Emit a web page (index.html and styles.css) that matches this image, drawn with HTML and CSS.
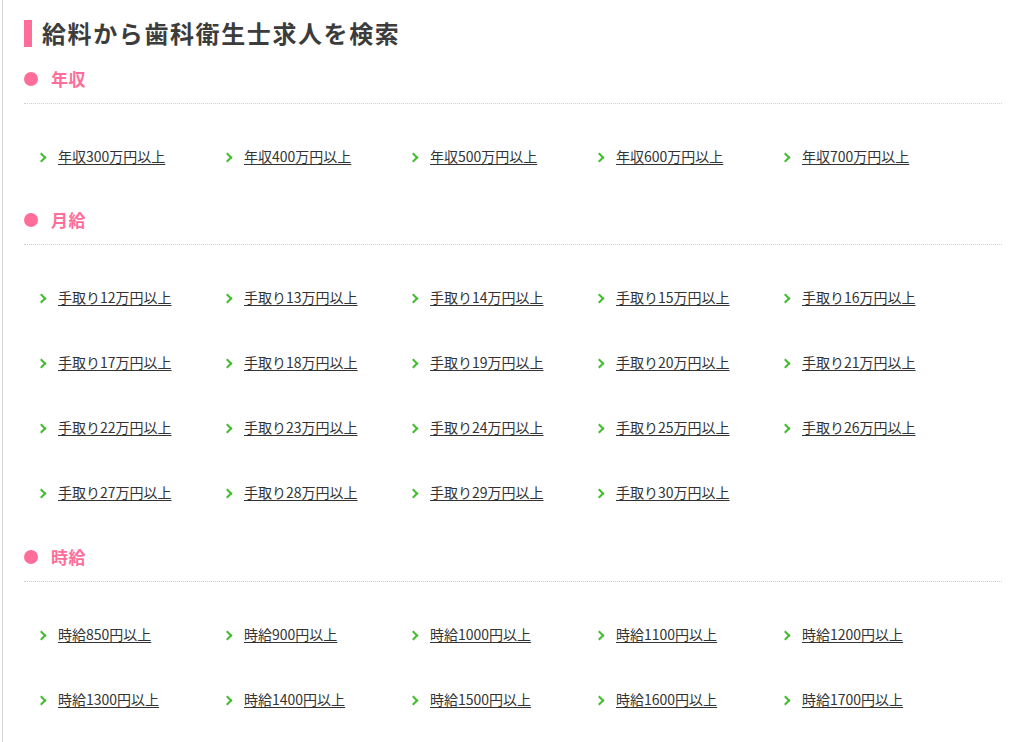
FILE: index.html
```html
<!DOCTYPE html>
<html lang="ja">
<head>
<meta charset="utf-8">
<link rel="stylesheet" href="styles.css">
</head>
<body>
<div class="page">
  <h2 class="title">給料から歯科衛生士求人を検索</h2>

  <section class="group">
    <h3 class="group-head">年収</h3>
    <ul class="links">
      <li><a href="#">年収300万円以上</a></li>
      <li><a href="#">年収400万円以上</a></li>
      <li><a href="#">年収500万円以上</a></li>
      <li><a href="#">年収600万円以上</a></li>
      <li><a href="#">年収700万円以上</a></li>
    </ul>
  </section>

  <section class="group">
    <h3 class="group-head">月給</h3>
    <ul class="links">
      <li><a href="#">手取り12万円以上</a></li>
      <li><a href="#">手取り13万円以上</a></li>
      <li><a href="#">手取り14万円以上</a></li>
      <li><a href="#">手取り15万円以上</a></li>
      <li><a href="#">手取り16万円以上</a></li>
      <li><a href="#">手取り17万円以上</a></li>
      <li><a href="#">手取り18万円以上</a></li>
      <li><a href="#">手取り19万円以上</a></li>
      <li><a href="#">手取り20万円以上</a></li>
      <li><a href="#">手取り21万円以上</a></li>
      <li><a href="#">手取り22万円以上</a></li>
      <li><a href="#">手取り23万円以上</a></li>
      <li><a href="#">手取り24万円以上</a></li>
      <li><a href="#">手取り25万円以上</a></li>
      <li><a href="#">手取り26万円以上</a></li>
      <li><a href="#">手取り27万円以上</a></li>
      <li><a href="#">手取り28万円以上</a></li>
      <li><a href="#">手取り29万円以上</a></li>
      <li><a href="#">手取り30万円以上</a></li>
    </ul>
  </section>

  <section class="group">
    <h3 class="group-head">時給</h3>
    <ul class="links">
      <li><a href="#">時給850円以上</a></li>
      <li><a href="#">時給900円以上</a></li>
      <li><a href="#">時給1000円以上</a></li>
      <li><a href="#">時給1100円以上</a></li>
      <li><a href="#">時給1200円以上</a></li>
      <li><a href="#">時給1300円以上</a></li>
      <li><a href="#">時給1400円以上</a></li>
      <li><a href="#">時給1500円以上</a></li>
      <li><a href="#">時給1600円以上</a></li>
      <li><a href="#">時給1700円以上</a></li>
    </ul>
  </section>
</div>
</body>
</html>
```

FILE: styles.css
```css
html, body {
  margin: 0;
  padding: 0;
  background: #fff;
}

body {
  padding-left: 2px;
  font-family: "Noto Sans CJK JP", "Noto Sans", sans-serif;
  color: #333;
}

.page {
  border-left: 1px solid #d8d8d8;
  padding: 19px 22px 40px 21px;
  min-height: 742px;
  box-sizing: border-box;
}

.title {
  margin: 0;
  display: flex;
  align-items: center;
  font-size: 24px;
  line-height: 28px;
  font-weight: bold;
  letter-spacing: 1.6px;
  color: #3c3c3c;
}

.title::before {
  content: "";
  display: block;
  width: 8px;
  height: 27px;
  background: #ff6d9b;
  margin-right: 10px;
}

.group-head {
  margin: 20px 0 0;
  padding-bottom: 12px;
  border-bottom: 1px dotted #cfcfcf;
  display: flex;
  align-items: center;
  font-size: 17px;
  line-height: 24px;
  font-weight: bold;
  color: #ff6d9b;
  letter-spacing: 0.5px;
}

.group + .group .group-head {
  margin-top: 18px;
}

.group:last-child .group-head {
  margin-top: 19px;
}

.group-head::before {
  content: "";
  display: block;
  width: 14px;
  height: 14px;
  border-radius: 50%;
  background: #ff6d9b;
  margin-right: 13px;
}

.links {
  list-style: none;
  margin: 0;
  padding: 19px 0 2px 17px;
  display: grid;
  grid-template-columns: repeat(5, 186px);
}

.links li {
  height: 65px;
  display: flex;
  align-items: center;
}

.links li::before {
  content: "";
  display: block;
  width: 5px;
  height: 5px;
  border-top: 2px solid #3fbf2a;
  border-right: 2px solid #3fbf2a;
  transform: translateY(2px) rotate(45deg);
  margin: 0 13px 0 -3px;
}

.links a {
  font-size: 14px;
  line-height: 20px;
  color: #333;
  text-decoration: underline;
  text-underline-offset: 2px;
}
```
